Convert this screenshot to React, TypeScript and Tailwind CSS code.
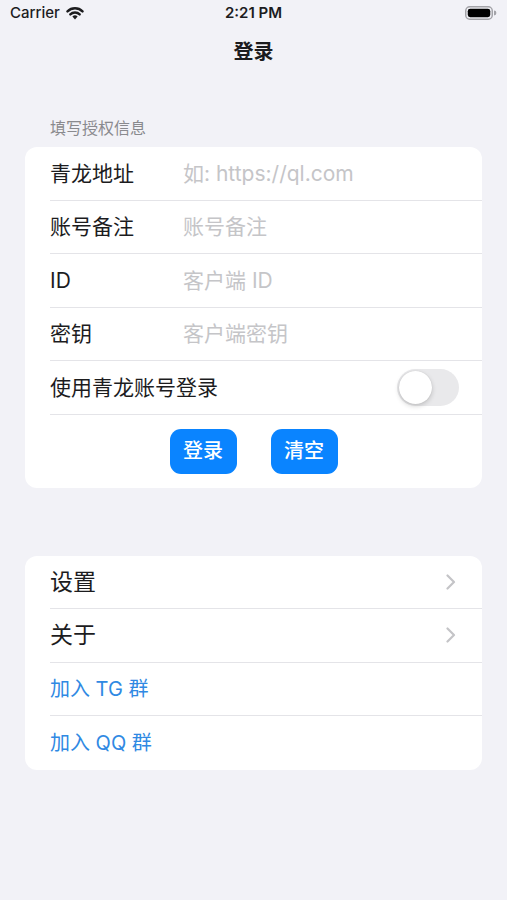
const font = { fontFamily: "Inter, 'Noto Sans CJK SC', sans-serif" }

function StatusBar() {
  return (
    <div className="relative flex h-[26px] items-center justify-between px-[10px] text-[15px] text-[#1c1c1e]">
      <div className="flex items-center gap-[6px]">
        <span className="font-medium">Carrier</span>
        <svg width="18" height="13" viewBox="0 0 18 13">
          <path d="M9 12.5 L6.4 9.6 A3.6 3.6 0 0 1 11.6 9.6 Z" fill="#1c1c1e" />
          <path d="M4.3 7.4 A6.6 6.6 0 0 1 13.7 7.4" stroke="#1c1c1e" strokeWidth="2.4" fill="none" strokeLinecap="round" />
          <path d="M1.5 4.4 A10.6 10.6 0 0 1 16.5 4.4" stroke="#1c1c1e" strokeWidth="2.4" fill="none" strokeLinecap="round" />
        </svg>
      </div>
      <span className="absolute left-1/2 -translate-x-1/2 font-semibold">2:21 PM</span>
      <svg width="32" height="14" viewBox="0 0 32 14">
        <rect x="0.75" y="0.75" width="26.5" height="12.5" rx="4" fill="none" stroke="#a3a3a8" strokeWidth="1.5" />
        <rect x="2.75" y="2.75" width="22.5" height="8.5" rx="2.4" fill="#000" />
        <path d="M29 4.6 A2.4 2.4 0 0 1 29 9.4 Z" fill="#a3a3a8" />
      </svg>
    </div>
  )
}

function Field({ label, placeholder }: { label: string; placeholder: string }) {
  return (
    <div className="flex h-[53.5px] items-center border-b border-[#e4e4e8] pr-6">
      <span className="w-[133px] shrink-0 text-[21px] text-[#1c1c1e]">{label}</span>
      <span className="text-[21px] text-[#c5c5c8]">{placeholder}</span>
    </div>
  )
}

function Chevron() {
  return (
    <svg width="10" height="16" viewBox="0 0 10 16">
      <path d="M1.5 1.5 L8 8 L1.5 14.5" stroke="#c4c4c7" strokeWidth="2.2" fill="none" strokeLinecap="round" strokeLinejoin="round" />
    </svg>
  )
}

function NavRow({ label }: { label: string }) {
  return (
    <div className="flex h-[53.5px] items-center justify-between border-b border-[#e4e4e8] pr-[26px]">
      <span className="text-[23px] text-[#1c1c1e]">{label}</span>
      <Chevron />
    </div>
  )
}

function LinkRow({ label, last }: { label: string; last?: boolean }) {
  return (
    <div className={`flex h-[53.5px] items-center ${last ? "" : "border-b border-[#e4e4e8]"}`}>
      <span className="text-[20px] text-[#2f89e3]">{label}</span>
    </div>
  )
}

export default function App() {
  return (
    <div className="min-h-[900px] w-full bg-[#f2f2f7]" style={font}>
      <StatusBar />

      <div className="flex h-[52px] items-center justify-center">
        <h1 className="text-[20px] font-semibold text-[#1c1c1e]">登录</h1>
      </div>

      <div className="px-[50px] pt-[40px] pb-[9px] text-[16px] leading-[20px] text-[#8a8a8e]">填写授权信息</div>

      <div className="mx-[25px] overflow-hidden rounded-[12px] bg-white pl-[25px]">
        <Field label="青龙地址" placeholder="如: https://ql.com" />
        <Field label="账号备注" placeholder="账号备注" />
        <Field label="ID" placeholder="客户端 ID" />
        <Field label="密钥" placeholder="客户端密钥" />
        <div className="flex h-[53.5px] items-center justify-between border-b border-[#e4e4e8] pr-[23px]">
          <span className="text-[21px] text-[#1c1c1e]">使用青龙账号登录</span>
          <div className="flex h-[37px] w-[62px] items-center rounded-full bg-[#e9e9eb] pl-[2px]">
            <div className="h-[33px] w-[33px] rounded-full bg-white shadow-[0_2px_5px_rgba(0,0,0,0.18),0_0_1px_rgba(0,0,0,0.15)]" />
          </div>
        </div>
        <div className="flex justify-center gap-[34px] pt-[14px] pb-[14px] pr-[25px]">
          <button className="h-[45px] w-[67px] rounded-[11px] bg-[#0a84ff] text-[20px] font-medium text-white">登录</button>
          <button className="h-[45px] w-[67px] rounded-[11px] bg-[#0a84ff] text-[20px] font-medium text-white">清空</button>
        </div>
      </div>

      <div className="mx-[25px] mt-[68px] overflow-hidden rounded-[12px] bg-white pl-[25px]">
        <NavRow label="设置" />
        <NavRow label="关于" />
        <LinkRow label="加入 TG 群" />
        <LinkRow label="加入 QQ 群" last />
      </div>
    </div>
  )
}
